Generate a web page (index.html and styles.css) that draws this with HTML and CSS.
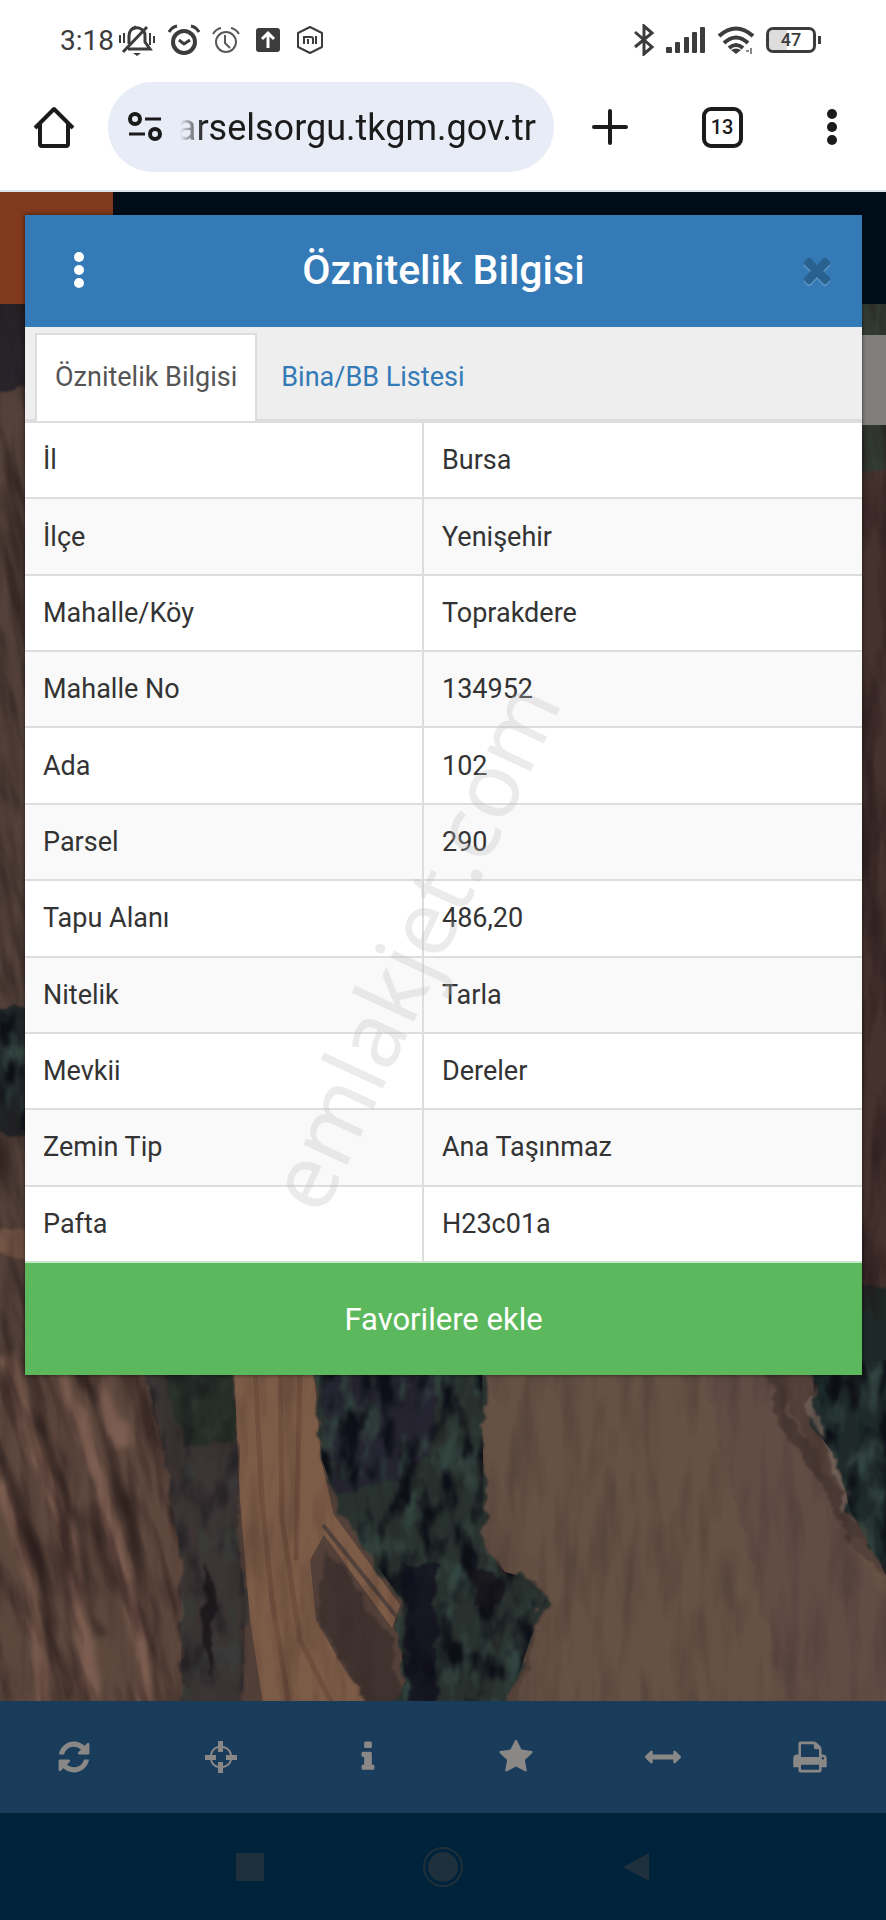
FILE: index.html
```html
<!DOCTYPE html>
<html lang="tr">
  <head>
    <meta charset="utf-8" />
    <meta name="viewport" content="width=device-width, initial-scale=1" />
    <title>Parsel Sorgu</title>
    <link rel="stylesheet" href="styles.css">
  </head>

  <body>
    <!-- Phone status bar -->
    <div class="status-bar">
      <div class="status-left">
        <span class="clock">3:18</span>
        <svg width="38" height="32" viewBox="0 0 38 32" fill="none" stroke="#3c3c3c" stroke-width="3">
          <path d="M10 25h22l-5-7v-5a8 8 0 0 0-12-8M11 20V12q0-7 7-9" />
          <path d="M5 28 29 3" />
          <path d="M2 11v8M6 9v10M32 9v12M36 12v7" stroke-width="2" />
          <path d="M15 29h8l-4 3z" fill="#3c3c3c" stroke="none" />
        </svg>
        <svg width="32" height="32" viewBox="0 0 32 32" fill="none" stroke="#3c3c3c" stroke-width="4">
          <circle cx="16" cy="18" r="11" />
          <path d="m11 16 5 4 6-4" stroke-width="3" />
          <path d="M1 8q3-5 8-6M31 8q-3-5-8-6" stroke-width="3" />
        </svg>
        <svg width="28" height="28" viewBox="0 0 28 28" fill="none" stroke="#5a5a5a" stroke-width="2">
          <circle cx="14" cy="16" r="10" />
          <path d="M13 9v8l5 5M1 8q3-5 8-6M27 8q-3-5-8-6" />
        </svg>
        <svg class="upload" width="24" height="24" viewBox="0 0 24 24">
          <rect width="24" height="24" rx="3" fill="#3c3c3c" />
          <path d="M12 20V5M6 11l6-6 6 6" fill="none" stroke="#fff" stroke-width="3" />
        </svg>
        <svg width="28" height="30" viewBox="0 0 28 30" fill="none" stroke="#3c3c3c" stroke-width="2">
          <path d="m14 2 12 6v14l-12 6-12-6V8z" stroke-linejoin="round" />
          <path d="M8 19v-7h7q2 0 2 2v5M12 14v5M20 11v8" />
        </svg>
      </div>
      <div class="status-right">
        <svg width="22" height="32" viewBox="0 0 22 32" fill="none" stroke="#3c3c3c" stroke-width="3">
          <path d="m2 8 17 15-8 7V2l8 7L2 23" />
        </svg>
        <svg width="40" height="26" viewBox="0 0 40 26" fill="#3c3c3c">
          <rect y="20" width="6" height="6" rx="1" />
          <rect x="9" y="15" width="5" height="11" rx="1" />
          <rect x="18" y="10" width="5" height="16" rx="1" />
          <rect x="26" y="5" width="5" height="21" rx="1" />
          <rect x="34" y="0" width="5" height="26" rx="1" />
        </svg>
        <svg width="38" height="28" viewBox="0 0 38 28" fill="none" stroke="#3c3c3c" stroke-width="4">
          <path d="M2 10q17-15 34 0M7 17q12-11 24 0M12 22q7-6 14 0" />
          <path d="m14 24 5 4 5-4q-5-3-10 0z" fill="#3c3c3c" stroke="none" />
          <path d="M29 25h3M34 22v6" stroke-width="2" stroke="#888" />
        </svg>
        <span class="battery">47</span>
      </div>
    </div>

    <!-- Browser toolbar -->
    <div class="browser-bar">
      <button class="bar-btn" aria-label="Ana sayfa">
        <svg width="42" height="42" viewBox="0 0 42 42" fill="none" stroke="#1b1b1b" stroke-width="4" stroke-linejoin="round">
          <path d="M2 22 21 3l19 19M7 18v20q0 2 2 2h24q2 0 2-2V18" />
        </svg>
      </button>
      <label class="address">
        <svg width="34" height="30" viewBox="0 0 34 30" fill="none" stroke="#1b1b1b" stroke-width="4">
          <circle cx="7" cy="7" r="5" />
          <circle cx="27" cy="22" r="5" />
          <path d="M17 7h16M1 22h16" stroke-width="3" />
        </svg>
        <span class="address-clip">
          <input type="text" value="parselsorgu.tkgm.gov.tr" aria-label="Adres">
        </span>
      </label>
      <button class="bar-btn" aria-label="Yeni sekme">
        <svg width="36" height="36" viewBox="0 0 36 36" stroke="#1b1b1b" stroke-width="4" stroke-linecap="round">
          <path d="M18 2v32M2 18h32" />
        </svg>
      </button>
      <button class="bar-btn"><span class="tab-count">13</span></button>
      <button class="bar-btn" aria-label="Menü">
        <svg width="10" height="36" viewBox="0 0 10 36" fill="#1b1b1b">
          <circle cx="5" cy="5" r="5" /><circle cx="5" cy="18" r="5" /><circle cx="5" cy="31" r="5" />
        </svg>
      </button>
    </div>

    <div class="app">
      <div class="app-header"></div>

      <!-- Satellite map -->
      <div class="map">
        <svg viewBox="0 304 886 1397" preserveAspectRatio="xMidYMax slice">
          <defs>
            <filter id="rough" x="-5%" y="-5%" width="110%" height="110%" color-interpolation-filters="sRGB">
              <feTurbulence type="fractalNoise" baseFrequency="0.05" numOctaves="3" seed="4" />
              <feDisplacementMap in="SourceGraphic" scale="18" xChannelSelector="R" yChannelSelector="G" />
              <feGaussianBlur stdDeviation="1" />
            </filter>
            <filter id="soft" x="-5%" y="-5%" width="110%" height="110%" color-interpolation-filters="sRGB">
              <feTurbulence type="fractalNoise" baseFrequency="0.03 0.01" numOctaves="3" seed="7" />
              <feDisplacementMap in="SourceGraphic" scale="24" xChannelSelector="R" yChannelSelector="G" />
              <feGaussianBlur stdDeviation="3" />
            </filter>
            <filter id="leaves" x="0" y="0" width="100%" height="100%" color-interpolation-filters="sRGB">
              <feTurbulence type="fractalNoise" baseFrequency="0.05 0.025" numOctaves="3" seed="9" result="noise" />
              <feColorMatrix in="noise" values="0 0 0 0 0.05  0 0 0 0 0.06  0 0 0 0 0.09  4 0 0 0 -1.9" result="shade" />
              <feColorMatrix in="noise" values="0 0 0 0 0.2  0 0 0 0 0.27  0 0 0 0 0.25  0 4 0 0 -2" result="light" />
              <feMerge result="spots">
                <feMergeNode in="light" />
                <feMergeNode in="shade" />
              </feMerge>
              <feGaussianBlur in="spots" stdDeviation="1" result="blurred" />
              <feComposite in="blurred" in2="SourceGraphic" operator="in" />
            </filter>
            <filter id="grain" x="0" y="0" width="100%" height="100%" color-interpolation-filters="sRGB">
              <feTurbulence type="fractalNoise" baseFrequency="0.05 0.01" numOctaves="3" seed="2" />
              <feColorMatrix values="0 0 0 0 0.14  0 0 0 0 0.09  0 0 0 0 0.09  3 0 0 0 -1.3" />
              <feComposite in2="SourceGraphic" operator="in" />
            </filter>
            <clipPath id="left-field">
              <path d="M0 304H40V1370H148L164 1453 181 1560V1701H0z" />
            </clipPath>
            <path id="hedge-left" d="M144 1360 164 1453 181 1560V1720H242L246 1600 238 1540 240 1450 232 1360z" />
            <path id="hedge-mid" d="M314 1360 322 1460 336 1500 362 1545 402 1600 396 1625 406 1680 385 1720H500L520 1670 530 1640 547 1600 535 1580 505 1572 484 1545 482 1360z" />
            <path id="hedge-right" d="M815 1360 812 1425 838 1460 850 1510 900 1600V1360z" />
          </defs>
          <rect y="304" width="886" height="1397" fill="#54423a" />
          <g filter="url(#soft)">
            <path d="M-20 1360H160L190 1560 192 1730H-20z" fill="#5e483e" />
            <path d="M50 1350 100 1480 130 1600 150 1730M0 1360 45 1480 80 1600 95 1730M95 1350 125 1450M0 1480 35 1600 45 1730" fill="none" stroke="#7c5d50" stroke-width="15" />
            <path d="M70 1350 110 1440 130 1520 160 1730M20 1360 75 1520 100 1640M0 1440 30 1530 70 1700" fill="none" stroke="#40302a" stroke-width="7" />
          </g>
          <g filter="url(#rough)">
            <rect x="-20" y="280" width="80" height="110" fill="#27252b" />
            <rect x="-20" y="1005" width="80" height="130" fill="#20272a" />
            <path d="M-20 1222 50 1240V1270L-20 1245z" fill="#745646" />
            <rect x="840" y="280" width="80" height="190" fill="#323c32" />
            <rect x="840" y="470" width="80" height="820" fill="#45322f" />
            <rect x="840" y="1285" width="80" height="110" fill="#1e2826" />
            <use href="#hedge-left" fill="#3d3535" />
            <path d="M160 1360H232L238 1440 184 1450z" fill="#283029" />
            <path d="M470 1360H770L790 1440 850 1540 920 1620V1720H515L545 1600 484 1550z" fill="#665145" />
            <path d="M700 1360H770L850 1540 900 1620V1720H790z" fill="#624d45" />
          </g>
          <path d="M234 1370H314L321 1460 334 1515 400 1605 392 1628 324 1535 310 1560 316 1620 345 1670 380 1710H264L250 1620 240 1500z" fill="#7c5b47" />
          <path d="M255 1370 262 1500 272 1600 290 1710M280 1370 282 1520 300 1640 335 1710M300 1370 296 1560" fill="none" stroke="#684838" stroke-width="5" opacity=".6" />
          <g filter="url(#rough)">
            <path d="M326 1548 392 1638 402 1720H378L345 1670 318 1620z" fill="#40332f" />
          </g>
          <path d="M323 1525 396 1616" stroke="#52423b" stroke-width="4" />
          <g filter="url(#rough)">
            <use href="#hedge-mid" fill="#29322f" />
            <path d="M316 1360H440L430 1450 405 1480 335 1490z" fill="#252531" />
            <use href="#hedge-right" fill="#1e2c2b" />
            <path d="M770 1360 785 1420 825 1480 855 1540" fill="none" stroke="#4a3934" stroke-width="12" />
            <path d="M810 1400 835 1460 848 1510" fill="none" stroke="#706057" stroke-width="5" />
          </g>
          <rect y="304" width="886" height="1397" filter="url(#grain)" opacity=".2" />
          <g clip-path="url(#left-field)" opacity=".6">
            <g transform="rotate(-14 80 1540)">
              <rect x="-400" y="200" width="900" height="1700" filter="url(#grain)" />
            </g>
          </g>
          <rect x="850" y="304" width="36" height="1100" filter="url(#grain)" opacity=".5" />
          <g filter="url(#leaves)">
            <use href="#hedge-left" opacity=".4" />
            <use href="#hedge-mid" />
            <use href="#hedge-right" />
            <rect x="0" y="1010" width="40" height="120" />
          </g>
          <g filter="url(#rough)" opacity=".8">
            <path d="M402 1565H436V1720H410z" fill="#11101d" />
            <path d="M472 1565 505 1580 500 1605 475 1610z" fill="#151219" />
            <path d="M205 1560 215 1590 212 1680 202 1640z" fill="#171417" />
          </g>
        </svg>
        <div class="map-control"></div>
      </div>

      <div class="toolbar">
        <button aria-label="Yenile">
          <svg viewBox="0 0 1792 1792"><path d="M1639 1056q0 5-1 7-64 268-268 434.500t-478 166.500q-146 0-282.500-55t-243.500-157l-129 129q-19 19-45 19t-45-19-19-45v-448q0-26 19-45t45-19h448q26 0 45 19t19 45-19 45l-137 137q71 66 161 102t187 36q134 0 250-65t186-179q11-17 53-117 8-23 30-23h192q13 0 22.500 9.500t9.500 22.500zm25-800v448q0 26-19 45t-45 19h-448q-26 0-45-19t-19-45 19-45l138-138q-148-137-349-137-134 0-250 65t-186 179q-11 17-53 117-8 23-30 23h-199q-13 0-22.500-9.500t-9.500-22.500v-7q65-268 270-434.500t480-166.500q146 0 284 55.500t245 156.500l130-129q19-19 45-19t45 19 19 45z" /></svg>
        </button>
        <button aria-label="Konum">
          <svg viewBox="0 0 36 36"><path d="M15 2h5v5a11 11 0 0 1 9 9h5v5h-5a11 11 0 0 1-9 8v5h-5v-5a11 11 0 0 1-8-8H2v-5h5a11 11 0 0 1 8-9zM15 9a9 9 0 0 0-6 7h4v5H9a9 9 0 0 0 6 6v-4h5v4a9 9 0 0 0 7-6h-4v-5h4a9 9 0 0 0-7-7v4h-5z" /></svg>
        </button>
        <button aria-label="Bilgi">
          <svg viewBox="0 0 1792 1792"><path d="M1216 1344v128q0 26-19 45t-45 19h-512q-26 0-45-19t-19-45v-128q0-26 19-45t45-19h64v-384h-64q-26 0-45-19t-19-45v-128q0-26 19-45t45-19h384q26 0 45 19t19 45v576h64q26 0 45 19t19 45zm-128-1152v192q0 26-19 45t-45 19h-256q-26 0-45-19t-19-45v-192q0-26 19-45t45-19h256q26 0 45 19t19 45z" /></svg>
        </button>
        <button aria-label="Favoriler">
          <svg viewBox="0 0 1792 1792"><path d="M1728 647q0 22-26 48l-363 354 86 500q1 7 1 20 0 21-10.500 35.500t-30.500 14.500q-19 0-40-12l-449-236-449 236q-22 12-40 12-21 0-31.500-14.500t-10.500-35.500q0-6 2-20l86-500-364-354q-25-27-25-48 0-37 56-46l502-73 225-455q19-41 49-41t49 41l225 455 502 73q56 9 56 46z" /></svg>
        </button>
        <button aria-label="Ölçüm">
          <svg viewBox="0 0 1792 1792"><path d="M1792 896q0 26-19 45l-256 256q-19 19-45 19t-45-19-19-45v-128h-1024v128q0 26-19 45t-45 19-45-19l-256-256q-19-19-19-45t19-45l256-256q19-19 45-19t45 19 19 45v128h1024v-128q0-26 19-45t45-19 45 19l256 256q19 19 19 45z" /></svg>
        </button>
        <button aria-label="Yazdır">
          <svg viewBox="0 0 1792 1792"><path d="M448 1536h896v-256h-896v256zm0-640h896v-384h-160q-40 0-68-28t-28-68v-160h-640v640zm1152 64q0-26-19-45t-45-19-45 19-19 45 19 45 45 19 45-19 19-45zm128 0v416q0 13-9.500 22.500t-22.500 9.500h-224v160q0 40-28 68t-68 28h-960q-40 0-68-28t-28-68v-160h-224q-13 0-22.500-9.500t-9.500-22.500v-416q0-79 56.500-135.500t135.500-56.500h64v-544q0-40 28-68t68-28h672q40 0 88 20t76 48l152 152q28 28 48 76t20 88v256h64q79 0 135.500 56.500t56.500 135.500z" /></svg>
        </button>
      </div>

      <!-- Parcel details -->
      <div class="modal" role="dialog" aria-labelledby="modal-title">
        <div class="modal-header">
          <button aria-label="Seçenekler">
            <svg width="12" height="38" viewBox="0 0 12 38" fill="#fff">
              <circle cx="6" cy="5" r="5" /><circle cx="6" cy="18" r="5" /><circle cx="6" cy="31" r="5" />
            </svg>
          </button>
          <h1 id="modal-title">Öznitelik Bilgisi</h1>
          <button class="close" aria-label="Kapat">
            <svg width="40" height="40" viewBox="0 64 1792 1792"><path d="M1490 1322q0 40-28 68l-136 136q-28 28-68 28t-68-28l-294-294-294 294q-28 28-68 28t-68-28l-136-136q-28-28-28-68t28-68l294-294-294-294q-28-28-28-68t28-68l136-136q28-28 68-28t68 28l294 294 294-294q28-28 68-28t68 28l136 136q28 28 28 68t-28 68l-294 294 294 294q28 28 28 68z" /></svg>
          </button>
        </div>
        <div class="tabs">
          <a href="#oznitelik" class="active">Öznitelik Bilgisi</a>
          <a href="#bina">Bina/BB Listesi</a>
        </div>
        <table>
          <tr><th>İl</th><td>Bursa</td></tr>
          <tr><th>İlçe</th><td>Yenişehir</td></tr>
          <tr><th>Mahalle/Köy</th><td>Toprakdere</td></tr>
          <tr><th>Mahalle No</th><td>134952</td></tr>
          <tr><th>Ada</th><td>102</td></tr>
          <tr><th>Parsel</th><td>290</td></tr>
          <tr><th>Tapu Alanı</th><td>486,20</td></tr>
          <tr><th>Nitelik</th><td>Tarla</td></tr>
          <tr><th>Mevkii</th><td>Dereler</td></tr>
          <tr><th>Zemin Tip</th><td>Ana Taşınmaz</td></tr>
          <tr><th>Pafta</th><td>H23c01a</td></tr>
        </table>
        <button class="btn-favorite">Favorilere ekle</button>
        <span class="watermark">emlakjet.com</span>
      </div>
    </div>

    <!-- Android navigation -->
    <div class="nav-bar">
      <button aria-label="Son uygulamalar">
        <svg width="28" height="28"><rect width="28" height="28" fill="#1e303b" /></svg>
      </button>
      <button aria-label="Ana ekran">
        <svg width="42" height="42" viewBox="0 0 42 42">
          <circle cx="21" cy="21" r="19" fill="none" stroke="#1e303b" stroke-width="2" />
          <circle cx="21" cy="21" r="15" fill="#1e303b" />
        </svg>
      </button>
      <button aria-label="Geri">
        <svg width="26" height="30"><path d="M0 15 26 1v28z" fill="#1e303b" /></svg>
      </button>
    </div>
  </body>
</html>
```
FILE: styles.css
```css
* {
  box-sizing: border-box;
}

body {
  display: flex;
  flex-direction: column;
  min-height: 100vh;
  margin: 0;
  background-color: #ffffff;
  color: #333333;
  font-family: Roboto, "Noto Sans", sans-serif;
  font-size: 27px;
}

button {
  display: flex;
  justify-content: center;
  align-items: center;
  padding: 0;
  border: none;
  background: none;
  font-family: inherit;
  cursor: pointer;
}

svg {
  display: block;
}

/* Status bar */
.status-bar {
  display: flex;
  justify-content: space-between;
  height: 64px;
  padding: 16px 70px 0 60px;
}

.status-left,
.status-right {
  display: flex;
  align-items: center;
  gap: 12px;
}

.status-right {
  gap: 11px;
}

.clock {
  margin-right: -8px;
  color: #3c3c3c;
  font-size: 28px;
}

.upload {
  margin: 0 4px;
}

.battery {
  position: relative;
  width: 50px;
  height: 26px;
  border: 3px solid #3c3c3c;
  border-radius: 7px;
  background: linear-gradient(to right, #dddddd 40%, #ffffff 40%);
  color: #3c3c3c;
  font-size: 18px;
  font-weight: 500;
  line-height: 20px;
  text-align: center;
}

.battery::after {
  content: "";
  position: absolute;
  top: 6px;
  right: -8px;
  width: 3px;
  height: 8px;
  background-color: #3c3c3c;
}

/* Browser toolbar */
.browser-bar {
  display: flex;
  align-items: center;
  height: 128px;
  border-bottom: 2px solid #dde5ea;
}

.bar-btn {
  width: 112px;
  height: 90px;
}

.bar-btn:first-child,
.bar-btn:last-child {
  width: 108px;
}

.address {
  display: flex;
  flex: 1;
  align-items: center;
  gap: 18px;
  min-width: 0;
  height: 90px;
  padding: 0 18px 0 20px;
  border-radius: 45px;
  background-color: #e8ecf6;
}

.address-clip {
  display: flex;
  flex: 1;
  justify-content: flex-end;
  min-width: 0;
  overflow: hidden;
  -webkit-mask-image: linear-gradient(to right, transparent, #000 24px);
  mask-image: linear-gradient(to right, transparent, #000 24px);
}

.address input {
  flex: none;
  width: 400px;
  padding: 2px 0 0;
  border: none;
  outline: none;
  background: none;
  color: #1b1b1b;
  font-family: inherit;
  font-size: 36px;
  text-align: right;
}

.tab-count {
  width: 41px;
  height: 41px;
  border: 4px solid #1b1b1b;
  border-radius: 9px;
  color: #1b1b1b;
  font-size: 20px;
  font-weight: 500;
  line-height: 33px;
}

/* Application */
.app {
  position: relative;
  display: flex;
  flex: 1;
  flex-direction: column;
}

.app-header {
  height: 112px;
  background: linear-gradient(to right, #80391c 113px, #000e1a 113px);
}

.map {
  position: relative;
  flex: 1;
  overflow: hidden;
  background-color: #54423a;
}

.map > svg {
  position: absolute;
  width: 100%;
  height: 100%;
}

.map-control {
  position: absolute;
  top: 31px;
  right: 0;
  width: 60px;
  height: 90px;
  background-color: #807f7e;
}

.toolbar {
  display: grid;
  grid-template-columns: repeat(6, 1fr);
  height: 112px;
  padding-right: 2px;
  background-color: #1a3c5b;
}

.toolbar svg {
  width: 36px;
  height: 36px;
  fill: #8a8887;
}

/* Modal */
.modal {
  position: absolute;
  top: 23px;
  left: 25px;
  right: 24px;
  background-color: #ffffff;
  box-shadow: 0 0 4px rgba(0, 0, 0, 0.6);
}

.modal-header {
  display: grid;
  grid-template-columns: 108px 1fr 108px;
  height: 112px;
  background-color: #337ab7;
}

.modal-header h1 {
  margin: 0;
  color: #ffffff;
  font-size: 41px;
  font-weight: 500;
  line-height: 110px;
  text-align: center;
}

.modal-header .close {
  justify-self: end;
  width: 90px;
}

.close svg {
  fill: #29628f;
  filter: drop-shadow(0 2px 0 #5c95c5);
}

.tabs {
  display: flex;
  align-items: flex-end;
  gap: 4px;
  height: 96px;
  padding-left: 10px;
  border-bottom: 4px solid #dddddd;
  background-color: #eeeeee;
}

.tabs a {
  height: 86px;
  padding: 0 18px;
  border: 2px solid transparent;
  border-bottom: none;
  color: #337ab7;
  line-height: 84px;
  text-decoration: none;
}

.tabs .active {
  height: 88px;
  margin-bottom: -2px;
  border-color: #dddddd;
  background-color: #ffffff;
  color: #555555;
}

table {
  width: 100%;
  height: 840px;
  border-collapse: separate;
  border-spacing: 0;
}

th,
td {
  padding: 0 18px;
  border-bottom: 2px solid #dddddd;
  font-weight: 400;
  text-align: left;
}

th {
  width: 399px;
  border-right: 2px solid #dddddd;
}

tr:nth-child(even) {
  background-color: #f9f9f9;
}

tr:last-child th,
tr:last-child td {
  border-bottom-color: #c9e8c9;
}

.btn-favorite {
  width: 100%;
  height: 112px;
  background-color: #5cb85c;
  color: #ffffff;
  font-size: 31px;
}

.watermark {
  position: absolute;
  top: 730px;
  left: 386px;
  color: rgba(190, 190, 190, 0.3);
  font-family: "Noto Sans", sans-serif;
  font-size: 90px;
  line-height: 1;
  transform: translate(-50%, -50%) rotate(-65deg);
  pointer-events: none;
}

/* Android navigation */
.nav-bar {
  display: grid;
  grid-template-columns: repeat(3, 193px);
  justify-content: center;
  height: 107px;
  background-color: #00233c;
}
```
